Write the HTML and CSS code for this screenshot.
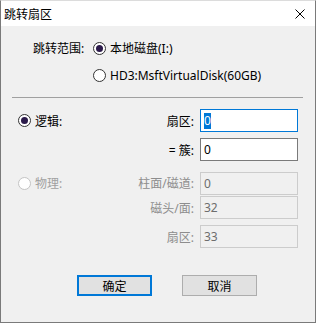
FILE: index.html
```html
<!DOCTYPE html>
<html lang="zh-CN">
<head>
  <meta charset="UTF-8" />
  <title>跳转扇区</title>
  <link rel="stylesheet" href="styles.css">
</head>
<body>
  <div class="window">
    <div class="titlebar">
      <span class="title">跳转扇区</span>
      <svg class="close" width="10" height="10" viewBox="0 0 10 10">
        <path d="M0.5 0.5 L9.5 9.5 M9.5 0.5 L0.5 9.5" stroke="#000" stroke-width="1" fill="none"/>
      </svg>
    </div>
    <div class="content">
      <div class="scope">
        <span class="label">跳转范围:</span>
        <label class="opt"><span class="radio checked"></span>本地磁盘(I:)</label>
        <span></span>
        <label class="opt"><span class="radio"></span>HD3:MsftVirtualDisk(60GB)</label>
      </div>
      <div class="sep"></div>
      <div class="fields">
        <label class="opt"><span class="radio checked"></span>逻辑:</label>
        <span class="flabel">扇区:</span>
        <div class="field focus"><span class="sel">0</span></div>

        <span></span>
        <span class="flabel">= 簇:</span>
        <div class="field">0</div>

        <label class="opt off gap"><span class="radio"></span>物理:</label>
        <span class="flabel off gap">柱面/磁道:</span>
        <div class="field off gap">0</div>

        <span></span>
        <span class="flabel off">磁头/面:</span>
        <div class="field off">32</div>

        <span></span>
        <span class="flabel off">扇区:</span>
        <div class="field off">33</div>
      </div>
      <div class="buttons">
        <button class="btn default">确定</button>
        <button class="btn">取消</button>
      </div>
    </div>
  </div>
</body>
</html>
```

FILE: styles.css
```css
* {
  box-sizing: border-box;
}
body {
  margin: 0;
  font-family: "Noto Sans", "Noto Sans CJK SC", sans-serif;
  font-size: 12px;
  color: #000;
  background: #f0f0f0;
}
.window {
  width: 316px;
  height: 323px;
  border: 1px solid #7a7a7a;
  border-top-color: #dcdcdc;
  display: flex;
  flex-direction: column;
}
.titlebar {
  height: 25px;
  background: #fff;
  display: flex;
  align-items: center;
  justify-content: space-between;
  padding: 0 10px 0 3px;
}
.title {
  font-size: 12px;
}
.close {
  display: block;
  margin-top: 1px;
}
.content {
  flex: 1;
  background: #f0f0f0;
  display: flex;
  flex-direction: column;
}
.scope {
  display: grid;
  grid-template-columns: 60px auto;
  grid-auto-rows: 22px;
  row-gap: 5px;
  align-items: center;
  padding: 11px 0 0 32px;
}
.opt {
  display: flex;
  align-items: center;
  gap: 4px;
  white-space: nowrap;
}
.radio {
  width: 13px;
  height: 13px;
  border-radius: 50%;
  border: 1px solid #333;
  background: #fff;
  display: flex;
  align-items: center;
  justify-content: center;
  flex-shrink: 0;
}
.radio.checked::after {
  content: "";
  width: 7px;
  height: 7px;
  border-radius: 50%;
  background: #2b1a4a;
}
.opt.off {
  color: #a0a0a0;
}
.opt.off .radio {
  border-color: #c4c4c4;
}
.sep {
  margin: 11px 12px 0 11px;
  border-top: 1px solid #a0a0a0;
}
.fields {
  display: grid;
  grid-template-columns: 1fr auto 98px;
  grid-auto-rows: 23px;
  column-gap: 6px;
  row-gap: 6px;
  align-items: center;
  padding: 11px 17px 0 17px;
}
.fields .gap {
  margin-top: 9px;
}
.flabel {
  text-align: right;
}
.flabel.off {
  color: #8d8d8d;
}
.field {
  height: 23px;
  border: 1px solid #7a7a7a;
  background: #fff;
  display: flex;
  align-items: center;
  padding-left: 3px;
}
.field.focus {
  border-color: #0078d7;
}
.field.off {
  border-color: #cccccc;
  background: #f0f0f0;
  color: #6d6d6d;
}
.sel {
  background: #0078d7;
  color: #fff;
  line-height: 16px;
}
.buttons {
  display: flex;
  gap: 30px;
  padding: 27px 0 0 76px;
}
.btn {
  width: 75px;
  height: 21px;
  padding: 0;
  font: inherit;
  color: #000;
  background: #e1e1e1;
  border: 1px solid #adadad;
}
.btn.default {
  border: 2px solid #0078d7;
}
```
